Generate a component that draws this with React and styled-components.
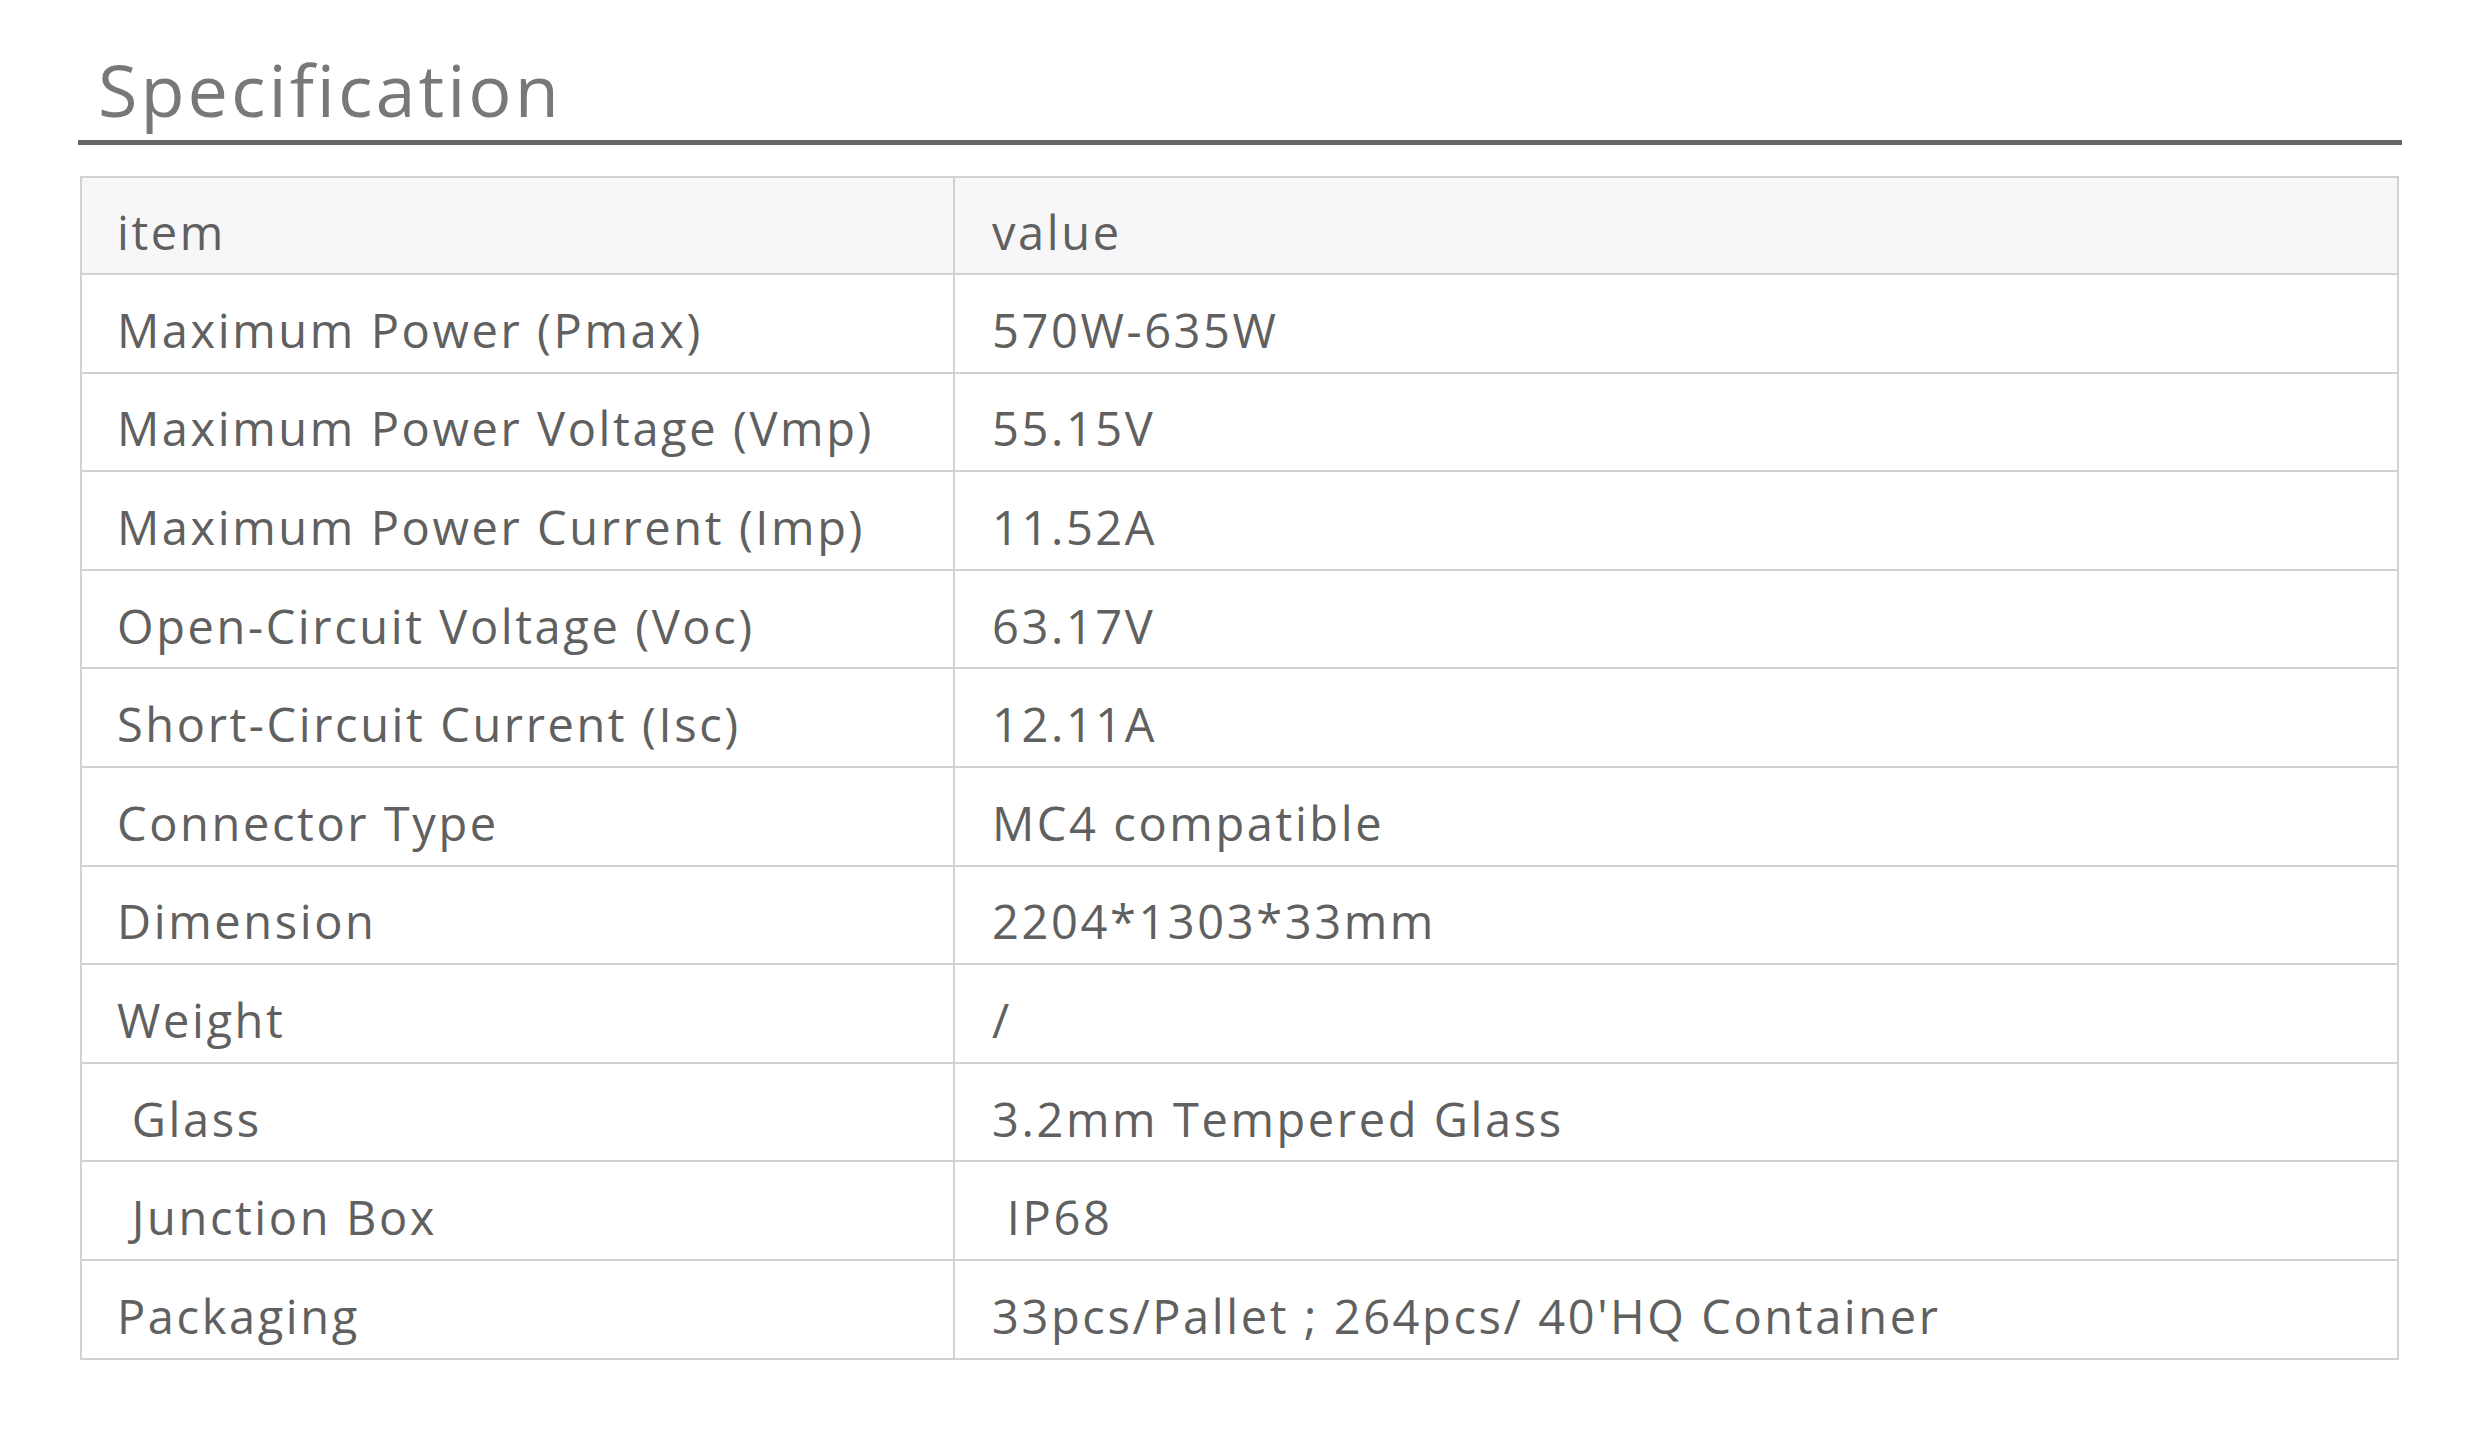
import React from 'react';
import styled, { createGlobalStyle } from 'styled-components';

const GlobalStyle = createGlobalStyle`
  html, body {
    margin: 0;
    padding: 0;
    background: #ffffff;
  }
  body {
    font-family: "Open Sans", "Liberation Sans", sans-serif;
  }
`;

const Page = styled.div`
  width: 2324px;
  padding: 38px 0 0 78px;
`;

const Title = styled.h2`
  margin: 0;
  padding: 0 0 0 20px;
  font-size: 72px;
  font-weight: 400;
  line-height: 102px;
  color: #787878;
  letter-spacing: 3px;
  border-bottom: 5px solid #666666;
`;

const Table = styled.table`
  margin: 31px 3px 0 2px;
  width: 2319px;
  border-collapse: collapse;
  table-layout: fixed;
  border: 2px solid #d2d2d2;
`;

const Row = styled.tr`
  height: ${p => (p.$head ? '97px' : '98.6px')};
  background: ${p => (p.$head ? '#f7f7f9' : '#ffffff')};
`;

const Cell = styled.td`
  border: 2px solid #d2d2d2;
  padding: 13px 0 0 ${p => (p.$value ? '37px' : '35px')};
  font-size: 47px;
  letter-spacing: 2.6px;
  color: #606060;
  white-space: pre;
  vertical-align: middle;
`;

const specs = [
  ['Maximum Power (Pmax)', '570W-635W'],
  ['Maximum Power Voltage (Vmp)', '55.15V'],
  ['Maximum Power Current (Imp)', '11.52A'],
  ['Open-Circuit Voltage (Voc)', '63.17V'],
  ['Short-Circuit Current (Isc)', '12.11A'],
  ['Connector Type', 'MC4 compatible'],
  ['Dimension', '2204*1303*33mm'],
  ['Weight', '/'],
  [' Glass', '3.2mm Tempered Glass'],
  [' Junction Box', ' IP68'],
  ['Packaging', "33pcs/Pallet ; 264pcs/ 40'HQ Container"],
];

export default function App() {
  return (
    <Page>
      <GlobalStyle />
      <Title>Specification</Title>
      <Table>
        <colgroup>
          <col style={{ width: '873px' }} />
          <col />
        </colgroup>
        <tbody>
          <Row $head>
            <Cell>item</Cell>
            <Cell $value>value</Cell>
          </Row>
          {specs.map(([k, v]) => (
            <Row key={k}>
              <Cell>{k}</Cell>
              <Cell $value>{v}</Cell>
            </Row>
          ))}
        </tbody>
      </Table>
    </Page>
  );
}
